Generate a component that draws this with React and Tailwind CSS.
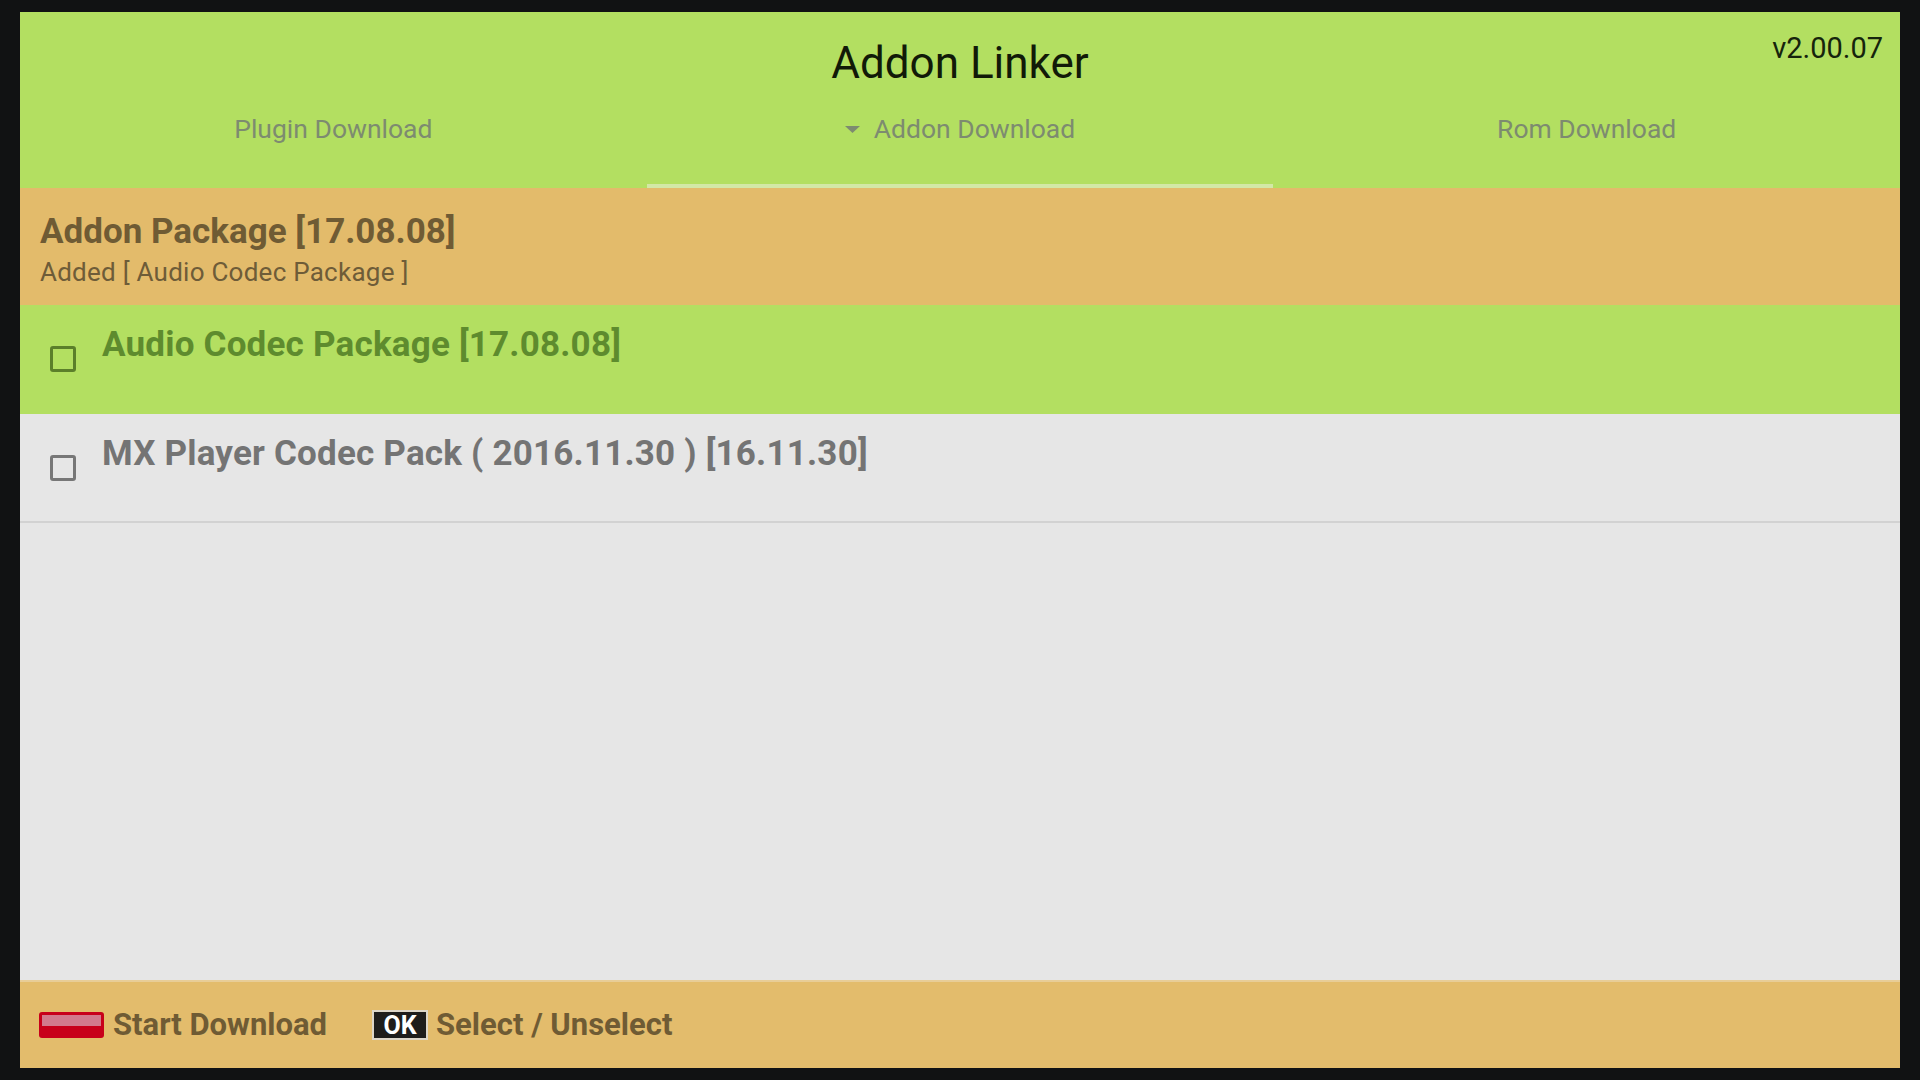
import React from 'react';

const tabs = [
  { label: 'Plugin Download', active: false },
  { label: 'Addon Download', active: true },
  { label: 'Rom Download', active: false },
];

const items = [
  { name: 'Audio Codec Package [17.08.08]', focused: true },
  { name: 'MX Player Codec Pack ( 2016.11.30 ) [16.11.30]', focused: false },
];

const Caret = () => (
  <svg width="15" height="7" viewBox="0 0 15 7" className="mr-[14px]">
    <path d="M0 0 H15 L7.5 7 Z" fill="#7d8b70" />
  </svg>
);

const Checkbox = ({ color }) => (
  <div className={`w-[26px] h-[26px] rounded-[3px] border-[3px] ${color}`} />
);

const App = () => {
  return (
    <div className="w-[1920px] h-[1080px] bg-[#111213] px-[20px] py-[12px] flex flex-col" style={{ fontFamily: 'Roboto, "Noto Sans", sans-serif' }}>
      {/* header with title, version and tabs */}
      <div className="h-[176px] bg-[#b3df61] flex flex-col shrink-0">
        <div className="grid grid-cols-[1fr_auto_1fr] items-start h-[75px]">
          <div />
          <div className="pt-[27px] leading-[48px] text-[44px] text-[#111a08]">Addon Linker</div>
          <div className="pt-[21px] pr-[17px] text-right leading-[30px] text-[29px] text-[#16240c]">v2.00.07</div>
        </div>
        <div className="grid grid-cols-3 mt-[26px]">
          {tabs.map((t) => (
            <div key={t.label} className="flex flex-col">
              <div className="flex items-center justify-center h-[32px] text-[26.5px] text-[#7d8b70]">
                {t.active && <Caret />}
                {t.label}
              </div>
              <div className={`mt-[39px] h-[4px] ${t.active ? 'bg-[#d3e8a6]' : ''}`} />
            </div>
          ))}
        </div>
      </div>

      {/* package summary */}
      <div className="h-[117px] bg-[#e3bb6b] px-[20px] pt-[24px] shrink-0 flex flex-col">
        <div className="leading-[40px] text-[35px] font-bold text-[#6f5b34]">Addon Package [17.08.08]</div>
        <div className="leading-[30px] mt-[5px] text-[26px] tracking-[0.25px] text-[#6e5c38]">Added [ Audio Codec Package ]</div>
      </div>

      {/* addon list */}
      <div className="flex-1 bg-[#e6e6e6] flex flex-col">
        {items.map((it) => (
          <div
            key={it.name}
            className={`h-[109px] flex items-start gap-[26px] pl-[30px] border-b-2 ${it.focused ? 'bg-[#b3df61] border-[#b3df61]' : 'bg-[#e6e6e6] border-[#d2d2d2]'}`}
          >
            <div className="pt-[41px]">
              <Checkbox color={it.focused ? 'border-[#5b7f2a]' : 'border-[#777777]'} />
            </div>
            <div className={`pt-[20px] leading-[40px] text-[35px] font-bold tracking-[0.2px] ${it.focused ? 'text-[#5e8b2e]' : 'text-[#747474]'}`}>
              {it.name}
            </div>
          </div>
        ))}
      </div>

      {/* key hints */}
      <div className="h-[88px] bg-[#e3bc6c] border-t-2 border-[#e8cd97] flex items-center pl-[19px] shrink-0">
        <div className="w-[65px] h-[26px] rounded-[3px] bg-[#c8001a] pt-[3px] px-[3px]">
          <div className="h-[11px] bg-[#d27a8c]" />
        </div>
        <span className="ml-[9px] text-[31px] font-bold text-[#6f5b34] leading-[36px]">Start Download</span>
        <div className="ml-[45px] w-[56px] h-[30px] bg-[#1e1d1b] border-2 border-[#ddd6c8] flex items-center justify-center text-[25px] font-bold text-white leading-none">OK</div>
        <span className="ml-[8px] text-[31px] font-bold text-[#6f5b34] leading-[36px]">Select / Unselect</span>
      </div>
    </div>
  );
};

export default App;
